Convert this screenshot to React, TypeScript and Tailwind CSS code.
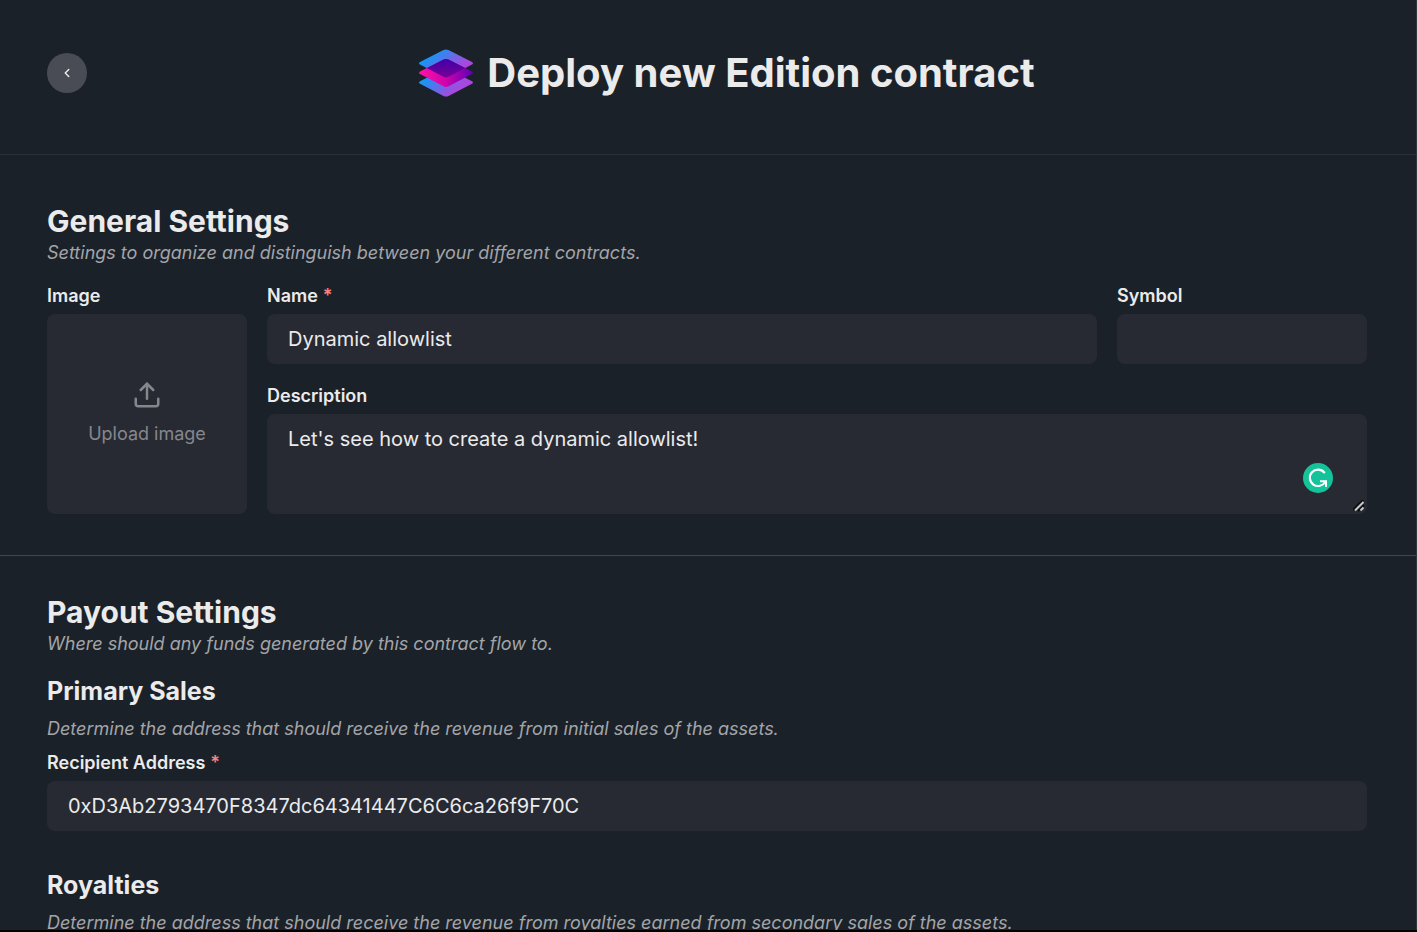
import React from "react";
import { FiChevronLeft, FiUpload } from "react-icons/fi";

const fieldClass =
  "block w-full rounded-lg bg-[#272a33] px-[21px] text-[20px] text-[#ebebeb] outline-none";

function Label({ htmlFor, children, required }: { htmlFor: string; children: React.ReactNode; required?: boolean }) {
  return (
    <label htmlFor={htmlFor} className="mb-1.5 block text-[18px] leading-6 font-semibold">
      {children}
      {required && <span className="ml-[5px] text-[#fc8181]">*</span>}
    </label>
  );
}

function Hint({ children }: { children: React.ReactNode }) {
  return <p className="text-[18px] leading-6 text-[#a3a5a8] italic">{children}</p>;
}

function EditionLogo() {
  return (
    <svg width="54" height="48" viewBox="0 0 54 48" className="mb-px" aria-hidden="true">
      <defs>
        <linearGradient id="layer" x1="0" y1="0.2" x2="1" y2="0.8">
          <stop offset="0.15" stopColor="#1298f5" />
          <stop offset="0.72" stopColor="#a24be0" />
          <stop offset="1" stopColor="#b83fd8" />
        </linearGradient>
        <linearGradient id="middle" x1="0" y1="0" x2="1" y2="0">
          <stop offset="0" stopColor="#ff12a4" />
          <stop offset="0.5" stopColor="#cf03ac" />
          <stop offset="1" stopColor="#5a00b4" />
        </linearGradient>
        <linearGradient id="overlap" x1="0" y1="0" x2="0" y2="1">
          <stop offset="0" stopColor="#3f00a8" />
          <stop offset="0.7" stopColor="#7d0094" />
        </linearGradient>
        <clipPath id="topShape">
          <path d="M24.5 1.1Q27 -0.3 29.5 1.1L53 13Q55 14.3 53 15.6L29.5 27.8Q27 29.2 24.5 27.8L1 15.6Q-1 14.3 1 13Z" />
        </clipPath>
      </defs>
      <path d="M24.5 20.3Q27 18.9 29.5 20.3L53 32.2Q55 33.5 53 34.8L29.5 46.9Q27 48.3 24.5 46.9L1 34.8Q-1 33.5 1 32.2Z" fill="url(#layer)" />
      <path d="M24.5 1.1Q27 -0.3 29.5 1.1L53 13Q55 14.3 53 15.6L29.5 27.8Q27 29.2 24.5 27.8L1 15.6Q-1 14.3 1 13Z" fill="url(#layer)" />
      <path d="M24.5 10.6Q27 9.2 29.5 10.6L53 22.5Q55 23.8 53 25.1L29.5 37.3Q27 38.7 24.5 37.3L1 25.1Q-1 23.8 1 22.5Z" fill="url(#middle)" />
      <path clipPath="url(#topShape)" d="M24.5 10.6Q27 9.2 29.5 10.6L53 22.5Q55 23.8 53 25.1L29.5 37.3Q27 38.7 24.5 37.3L1 25.1Q-1 23.8 1 22.5Z" fill="url(#overlap)" />
    </svg>
  );
}

export default function App() {
  return (
    <div className="h-screen overflow-hidden border-b-2 border-black bg-[#1b2129] font-['Inter',sans-serif] text-[#ebebeb] [font-variant-ligatures:none]">
      <main className="h-full overflow-hidden border-r border-[#2f363d]">
        <header className="flex items-center border-b border-[#2a3037] pt-[43px] pr-[49px] pb-[51px] pl-[47px]">
          <button
            type="button"
            aria-label="Back"
            className="flex size-10 shrink-0 items-center justify-center rounded-full bg-[#494c54]"
          >
            <FiChevronLeft size={14} strokeWidth={2.5} />
          </button>
          <h1 className="flex flex-1 items-center justify-center gap-[14px] text-[40px] leading-[60px] font-bold">
            <EditionLogo />
            Deploy new Edition contract
          </h1>
        </header>

        <form>
          <section className="border-b border-[#42474e] pt-[47px] pr-[49px] pb-[41px] pl-[47px]">
            <h2 className="text-[30px] leading-[39px] font-bold">General Settings</h2>
            <Hint>Settings to organize and distinguish between your different contracts.</Hint>
            <div className="mt-[19px] flex gap-5">
              <div className="w-[200px] shrink-0">
                <Label htmlFor="image">Image</Label>
                <button
                  id="image"
                  type="button"
                  className="flex h-[200px] w-full flex-col items-center justify-center gap-3 rounded-lg bg-[#272a33] pb-0.5 text-[18px] leading-6 text-[#85878c]"
                >
                  <FiUpload size={30} />
                  Upload image
                </button>
              </div>
              <div className="flex min-w-0 flex-1 flex-col gap-5">
                <div className="flex gap-5">
                  <div className="min-w-0 flex-1">
                    <Label htmlFor="name" required>Name</Label>
                    <input id="name" className={`${fieldClass} h-[50px]`} defaultValue="Dynamic allowlist" />
                  </div>
                  <div className="w-[250px] shrink-0">
                    <Label htmlFor="symbol">Symbol</Label>
                    <input id="symbol" className={`${fieldClass} h-[50px]`} />
                  </div>
                </div>
                <div className="relative">
                  <Label htmlFor="description">Description</Label>
                  <textarea
                    id="description"
                    className={`${fieldClass} h-[100px] resize-none py-[11px] leading-7`}
                    defaultValue="Let's see how to create a dynamic allowlist!"
                  />
                  <svg className="absolute right-[34px] bottom-[21px]" width="30" height="30" viewBox="0 0 30 30" aria-hidden="true">
                    <circle cx="15" cy="15" r="15" fill="#15c39a" />
                    <path d="M21.3 9.5A8.2 8.2 0 1 0 22.3 18.7" fill="none" stroke="#fff" strokeWidth="2.1" strokeLinecap="round" />
                    <path d="M17 18.2H23V24" fill="none" stroke="#fff" strokeWidth="2" />
                  </svg>
                  <svg className="absolute right-0.5 bottom-0.5" width="12" height="12" viewBox="0 0 12 12" aria-hidden="true">
                    <path d="M0 10L10 0M5 11L11 5" stroke="#0c0d10" strokeWidth="2" />
                    <path d="M2 10.500L10.500 2M7.500 10.500L10.500 7.500" stroke="#c8c8c8" strokeWidth="2" />
                  </svg>
                </div>
              </div>
            </div>
          </section>

          <section className="pt-[37px] pr-[49px] pl-[47px]">
            <h2 className="text-[30px] leading-[39px] font-bold">Payout Settings</h2>
            <Hint>Where should any funds generated by this contract flow to.</Hint>
            <div className="mt-5">
              <h3 className="mb-[11px] text-[25px] leading-[30px] font-bold">Primary Sales</h3>
              <Hint>Determine the address that should receive the revenue from initial sales of the assets.</Hint>
              <div className="mt-[10px]">
                <Label htmlFor="recipient" required>Recipient Address</Label>
                <input
                  id="recipient"
                  className={`${fieldClass} h-[50px]`}
                  defaultValue="0xD3Ab2793470F8347dc64341447C6C6ca26f9F70C"
                />
              </div>
            </div>
            <div className="mt-[39px]">
              <h3 className="mb-[11px] text-[25px] leading-[30px] font-bold">Royalties</h3>
              <Hint>Determine the address that should receive the revenue from royalties earned from secondary sales of the assets.</Hint>
            </div>
          </section>
        </form>
      </main>
    </div>
  );
}
